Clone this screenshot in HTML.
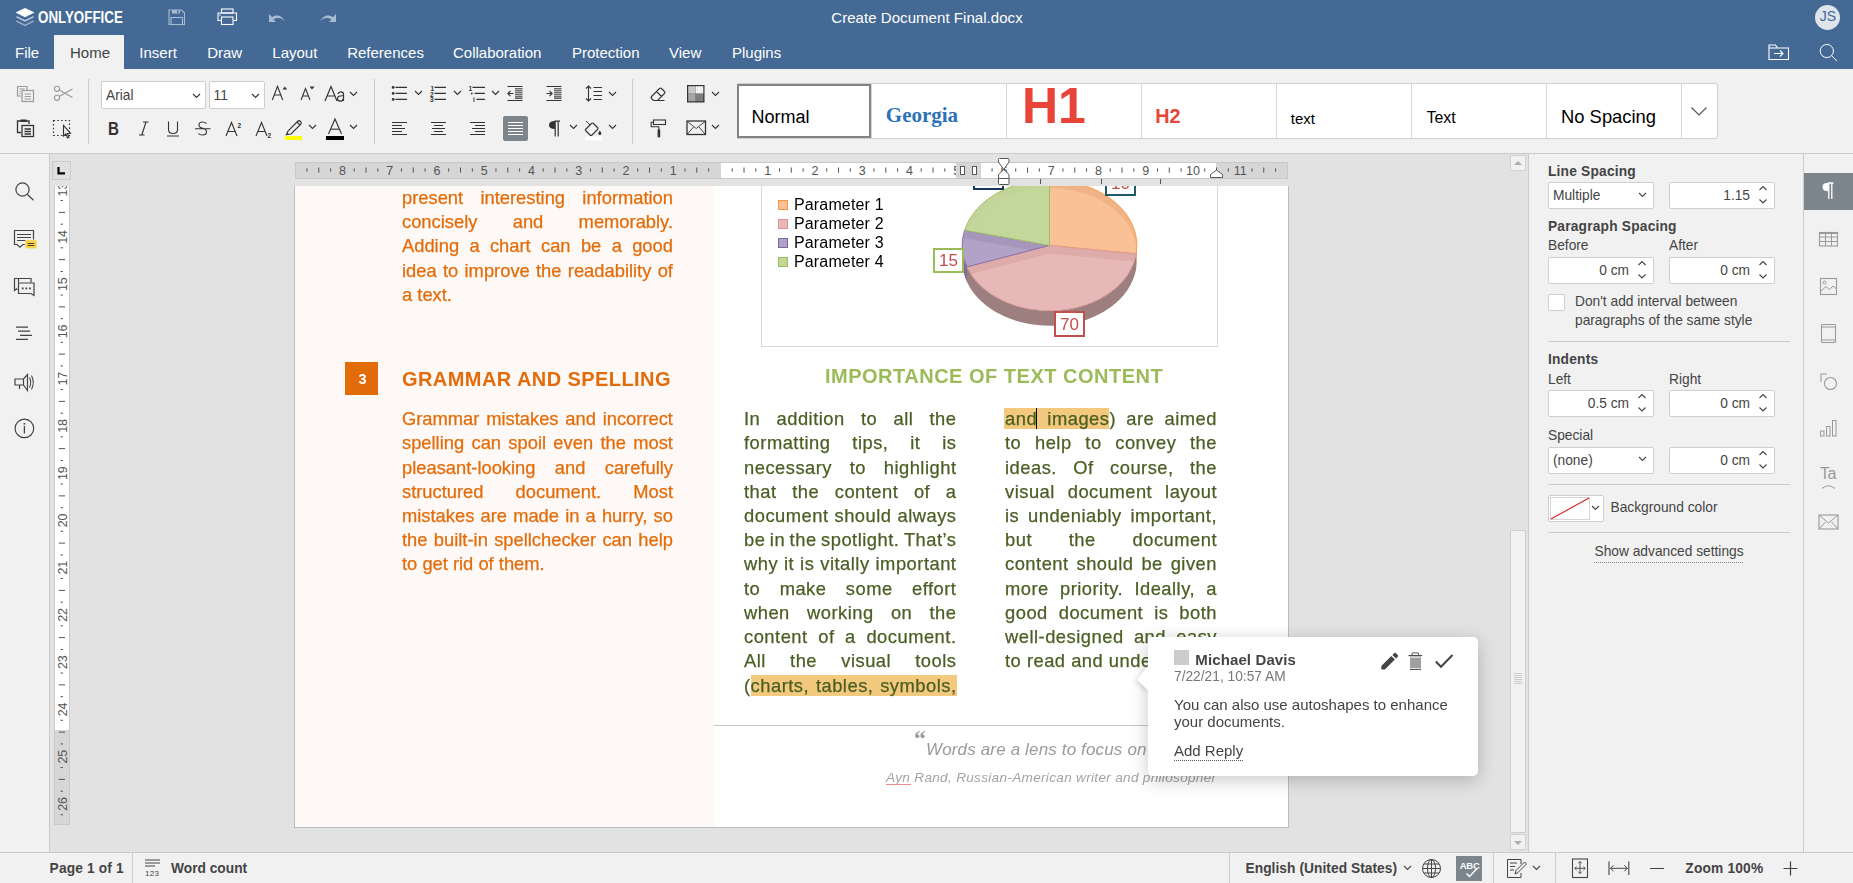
<!DOCTYPE html><html><head><meta charset="utf-8"><title>ONLYOFFICE</title><style>
html,body{margin:0;padding:0;width:1853px;height:883px;overflow:hidden;background:#f1f1f1;font-family:"Liberation Sans",sans-serif;}
.t{position:absolute;white-space:nowrap;}
.doc{will-change:transform;}
.j{-webkit-text-stroke:0.25px currentColor;}
.j{position:absolute;will-change:transform;display:flex;justify-content:space-between;white-space:nowrap;font-family:"Liberation Sans",sans-serif;}
.r{position:absolute;box-sizing:border-box;}
.s{position:absolute;overflow:visible;}
</style></head><body>

<div class="r" style="left:0px;top:0px;width:1853px;height:69px;background:#446995;"></div>
<svg class="s" style="left:14px;top:7px;" width="22" height="21" viewBox="0 0 22 21">
<path d="M11 1 L20.5 5.6 L11 10.2 L1.5 5.6 Z" fill="#fff"/>
<path d="M3.2 9.2 L11 13 L18.8 9.2 L20.5 10.1 L11 14.8 L1.5 10.1 Z" fill="#fff" opacity="0.65"/>
<path d="M3.2 13.6 L11 17.4 L18.8 13.6 L20.5 14.5 L11 19.2 L1.5 14.5 Z" fill="#fff" opacity="0.45"/>
</svg>
<div class="t " style="left:38.30px;top:9.63px;font-size:15.8px;line-height:15.8px;color:#fff;font-weight:bold;font-style:normal;font-family:'Liberation Sans', sans-serif;transform:scaleX(0.845);transform-origin:0 0;">ONLYOFFICE</div>
<svg class="s" style="left:168px;top:9px;" width="18" height="17" viewBox="0 0 18 17"><g fill="none" stroke="#a8bad0" stroke-width="1.1">
<path d="M1 1 H13.5 L16.5 4 V15.5 H1 Z"/><rect x="3" y="8.5" width="11.5" height="7"/></g>
<rect x="4" y="1" width="8" height="3.5" fill="#a8bad0"/><rect x="9" y="1.5" width="1.5" height="2.5" fill="#446995"/></svg>
<svg class="s" style="left:217px;top:8px;" width="21" height="18" viewBox="0 0 21 18"><g fill="none" stroke="#fff" stroke-width="1.1">
<rect x="4.5" y="1" width="11.5" height="4"/><path d="M4 12.5 H1 V5 H19.5 V12.5 H16.5"/><rect x="4.5" y="9" width="11.5" height="7.5"/></g>
<rect x="2.5" y="6.5" width="1.2" height="1.2" fill="#fff"/></svg>
<svg class="s" style="left:268px;top:13px;" width="19" height="10" viewBox="0 0 19 10"><path d="M1 1 V9 H8 L5.5 6.5 C9 4 13.5 4.5 17 8.5 C14 2 8 1 4 4 Z" fill="#a8bad0"/></svg>
<svg class="s" style="left:318px;top:13px;" width="19" height="10" viewBox="0 0 19 10"><path d="M18 1 V9 H11 L13.5 6.5 C10 4 5.5 4.5 2 8.5 C5 2 11 1 15 4 Z" fill="#a8bad0"/></svg>
<div class="t " style="left:831.30px;top:10.10px;font-size:15px;line-height:15px;color:#fff;font-weight:normal;font-style:normal;font-family:'Liberation Sans', sans-serif;letter-spacing:0.05px;">Create Document Final.docx</div>
<div class="r" style="left:1815px;top:5px;width:25px;height:25px;border-radius:50%;background:#dfe4ec;"></div>
<div class="t " style="left:1818.30px;top:9.35px;font-size:14px;line-height:14px;color:#446995;font-weight:normal;font-style:normal;font-family:'Liberation Sans', sans-serif;width:19px;text-align:center;">JS</div>
<div class="r" style="left:54px;top:35px;width:70px;height:34px;background:#f1f1f1;"></div>
<div class="t " style="left:15.00px;top:45.20px;font-size:15px;line-height:15px;color:#fff;font-weight:normal;font-style:normal;font-family:'Liberation Sans', sans-serif;">File</div>
<div class="t " style="left:70.00px;top:45.20px;font-size:15px;line-height:15px;color:#444;font-weight:normal;font-style:normal;font-family:'Liberation Sans', sans-serif;">Home</div>
<div class="t " style="left:139.30px;top:45.20px;font-size:15px;line-height:15px;color:#fff;font-weight:normal;font-style:normal;font-family:'Liberation Sans', sans-serif;">Insert</div>
<div class="t " style="left:207.20px;top:45.20px;font-size:15px;line-height:15px;color:#fff;font-weight:normal;font-style:normal;font-family:'Liberation Sans', sans-serif;">Draw</div>
<div class="t " style="left:272.30px;top:45.20px;font-size:15px;line-height:15px;color:#fff;font-weight:normal;font-style:normal;font-family:'Liberation Sans', sans-serif;">Layout</div>
<div class="t " style="left:347.20px;top:45.20px;font-size:15px;line-height:15px;color:#fff;font-weight:normal;font-style:normal;font-family:'Liberation Sans', sans-serif;">References</div>
<div class="t " style="left:453.00px;top:45.20px;font-size:15px;line-height:15px;color:#fff;font-weight:normal;font-style:normal;font-family:'Liberation Sans', sans-serif;">Collaboration</div>
<div class="t " style="left:572.00px;top:45.20px;font-size:15px;line-height:15px;color:#fff;font-weight:normal;font-style:normal;font-family:'Liberation Sans', sans-serif;">Protection</div>
<div class="t " style="left:669.00px;top:45.20px;font-size:15px;line-height:15px;color:#fff;font-weight:normal;font-style:normal;font-family:'Liberation Sans', sans-serif;">View</div>
<div class="t " style="left:732.00px;top:45.20px;font-size:15px;line-height:15px;color:#fff;font-weight:normal;font-style:normal;font-family:'Liberation Sans', sans-serif;">Plugins</div>
<svg class="s" style="left:1768px;top:44px;" width="22" height="17" viewBox="0 0 22 17"><g fill="none" stroke="#fff" stroke-width="1.1"><path d="M1 3.5 V15.5 H20.5 V4 H9.5 L7.5 1 H1 Z"/><path d="M1 4 H9"/><path d="M6 9.5 H15 M12 6.5 L15 9.5 L12 12.5"/></g></svg>
<svg class="s" style="left:1818px;top:43px;" width="21" height="19" viewBox="0 0 21 19"><g fill="none" stroke="#fff" stroke-width="1"><circle cx="8.8" cy="8" r="6.6"/><path d="M13.5 12.6 L19 18"/></g></svg>
<div class="r" style="left:0px;top:69px;width:1853px;height:84px;background:#f1f1f1;"></div>
<div class="r" style="left:0px;top:153px;width:1853px;height:1px;background:#cbcbcb;"></div>
<div class="r" style="left:88px;top:79px;width:1px;height:65px;background:#cbcbcb;"></div>
<div class="r" style="left:374px;top:79px;width:1px;height:65px;background:#cbcbcb;"></div>
<div class="r" style="left:632px;top:79px;width:1px;height:65px;background:#cbcbcb;"></div>
<svg class="s" style="left:16px;top:85px;" width="19" height="18" viewBox="0 0 19 18"><g fill="none" stroke="#9a9a9a" stroke-width="1.2"><path d="M5.5 11 H1.5 V1.5 H11 V5"/><rect x="6" y="5.5" width="11.5" height="11"/>
<path d="M8.5 9 H15 M8.5 11.5 H15 M8.5 14 H15 M3.5 4 H8.5 M3.5 6.5 H4.5 M3.5 8.5 H4.5"/></g></svg>
<svg class="s" style="left:53px;top:85px;" width="21" height="17" viewBox="0 0 21 17"><g fill="none" stroke="#9a9a9a" stroke-width="1.1"><circle cx="4" cy="3.8" r="2.6"/><circle cx="4" cy="12.8" r="2.6"/>
<path d="M6.2 5 L19.5 12.5 M6.2 11.6 L19.5 4"/></g></svg>
<svg class="s" style="left:16px;top:119px;" width="19" height="19" viewBox="0 0 19 19"><g fill="none" stroke="#333" stroke-width="1.3"><path d="M5 13.5 H1.5 V2 H13 V5"/><rect x="6" y="6.5" width="11.5" height="11"/>
<path d="M8.5 10 H15 M8.5 12.5 H15 M8.5 15 H15"/></g><rect x="4.5" y="0.5" width="6" height="2.5" fill="#333"/></svg>
<svg class="s" style="left:52px;top:119px;" width="21" height="21" viewBox="0 0 21 21"><rect x="1.5" y="1.5" width="16" height="15" fill="none" stroke="#333" stroke-width="1.2" stroke-dasharray="1.6 2.2"/>
<path d="M11.5 6.5 L11.5 17 L13.8 15 L15.5 19 L17 18.3 L15.3 14.5 L18.5 14.3 Z" fill="#f1f1f1" stroke="#333" stroke-width="1.1"/></svg>
<div class="r" style="left:101px;top:81px;width:105px;height:28px;background:#fff;border:1px solid #cfcfcf;border-radius:2px;"></div>
<div class="t " style="left:106.00px;top:88.96px;font-size:13.75px;line-height:13.75px;color:#444;font-weight:normal;font-style:normal;font-family:'Liberation Sans', sans-serif;">Arial</div>
<svg class="s" style="left:192px;top:92.5px;" width="9" height="6" viewBox="0 0 9 6"><path d="M1 1 L4.5 4.5 L8 1" fill="none" stroke="#333" stroke-width="1.1"/></svg>
<div class="r" style="left:209px;top:81px;width:56px;height:28px;background:#fff;border:1px solid #cfcfcf;border-radius:2px;"></div>
<div class="t " style="left:213.50px;top:88.96px;font-size:13.75px;line-height:13.75px;color:#444;font-weight:normal;font-style:normal;font-family:'Liberation Sans', sans-serif;">11</div>
<svg class="s" style="left:251.3px;top:92.5px;" width="9" height="6" viewBox="0 0 9 6"><path d="M1 1 L4.5 4.5 L8 1" fill="none" stroke="#333" stroke-width="1.1"/></svg>
<svg class="s" style="left:271px;top:85px;" width="18" height="16" viewBox="0 0 18 16"><path d="M1.3 15 L6.5 1.3 L11.7 15 M3.2 10 H9.8" fill="none" stroke="#333" stroke-width="1.1"/><path d="M11.5 4.5 L13.8 1.5 L16.2 4.5 Z" fill="#333"/></svg>
<svg class="s" style="left:300px;top:85px;" width="17" height="16" viewBox="0 0 17 16"><path d="M1 15 L5.5 3.5 L10 15 M2.6 11 H8.4" fill="none" stroke="#333" stroke-width="1.1"/><path d="M9.5 1.5 L14.5 1.5 L12 4.5 Z" fill="#333"/></svg>
<svg class="s" style="left:324px;top:85px;" width="22" height="17" viewBox="0 0 22 17"><path d="M1 16 L7 1.5 L13 16 M3.2 11 H10.8" fill="none" stroke="#333" stroke-width="1.2"/>
<path d="M13.8 9 Q14.5 6.8 16.8 6.8 Q19.5 6.8 19.5 9.5 V16 M19.5 10.8 Q13.5 10.5 13.5 13.5 Q13.5 16.2 16.2 16.2 Q18.8 16.2 19.5 13.5" fill="none" stroke="#333" stroke-width="1.2"/></svg>
<svg class="s" style="left:349px;top:91px;" width="9" height="6" viewBox="0 0 9 6"><path d="M1 1 L4.5 4.5 L8 1" fill="none" stroke="#333" stroke-width="1.1"/></svg>
<svg class="s" style="left:391px;top:85px;" width="18" height="17" viewBox="0 0 18 17"><g fill="#333"><circle cx="2.2" cy="2.4" r="1.4"/><circle cx="2.2" cy="8.4" r="1.4"/><circle cx="2.2" cy="14.4" r="1.4"/></g>
<path d="M4.5 2.4 H16 M4.5 8.4 H16 M4.5 14.4 H16" stroke="#333" stroke-width="1.1"/></svg>
<svg class="s" style="left:414px;top:90px;" width="9" height="6" viewBox="0 0 9 6"><path d="M1 1 L4.5 4.5 L8 1" fill="none" stroke="#333" stroke-width="1.1"/></svg>
<svg class="s" style="left:430px;top:85px;" width="18" height="18" viewBox="0 0 18 18"><text x="0.5" y="5.8" font-size="6.5" font-family="Liberation Sans" font-weight="bold" fill="#333">1</text>
<text x="0" y="11.6" font-size="6.5" font-family="Liberation Sans" font-weight="bold" fill="#333">2</text>
<text x="0" y="17.4" font-size="6.5" font-family="Liberation Sans" font-weight="bold" fill="#333">3</text>
<path d="M4.5 2.4 H16 M4.5 8.4 H16 M4.5 14.4 H16" stroke="#333" stroke-width="1.1"/></svg>
<svg class="s" style="left:453px;top:90px;" width="9" height="6" viewBox="0 0 9 6"><path d="M1 1 L4.5 4.5 L8 1" fill="none" stroke="#333" stroke-width="1.1"/></svg>
<svg class="s" style="left:468px;top:85px;" width="19" height="18" viewBox="0 0 19 18"><text x="0.5" y="6.2" font-size="6.5" font-family="Liberation Sans" font-weight="bold" fill="#333">1</text>
<circle cx="3.8" cy="8.5" r="0.9" fill="#333"/><text x="5" y="17.4" font-size="6.5" font-family="Liberation Sans" font-weight="bold" fill="#333">i</text>
<path d="M4.5 2.4 H17 M6.5 8.4 H17 M8.5 14.4 H17" stroke="#333" stroke-width="1.1"/></svg>
<svg class="s" style="left:491px;top:90px;" width="9" height="6" viewBox="0 0 9 6"><path d="M1 1 L4.5 4.5 L8 1" fill="none" stroke="#333" stroke-width="1.1"/></svg>
<svg class="s" style="left:507px;top:85px;" width="17" height="17" viewBox="0 0 17 17"><path d="M0.5 1.5 H15.5 M0.5 15.5 H15.5 M8 3.8 H15.5 M8 5.8 H15.5 M8 7.8 H15.5 M8 9.8 H15.5 M8 11.8 H15.5 M8 13.3 H15.5" stroke="#333" stroke-width="1"/>
<path d="M6.5 8.5 H0.8 M3.5 5.8 L0.8 8.5 L3.5 11.2" fill="none" stroke="#333" stroke-width="1.1"/></svg>
<svg class="s" style="left:546px;top:85px;" width="17" height="17" viewBox="0 0 17 17"><path d="M0.5 1.5 H15.5 M0.5 15.5 H15.5 M8 3.8 H15.5 M8 5.8 H15.5 M8 7.8 H15.5 M8 9.8 H15.5 M8 11.8 H15.5 M8 13.3 H15.5" stroke="#333" stroke-width="1"/>
<path d="M0.5 8.5 H6.2 M3.5 5.8 L6.2 8.5 L3.5 11.2" fill="none" stroke="#333" stroke-width="1.1"/></svg>
<svg class="s" style="left:585px;top:85px;" width="18" height="17" viewBox="0 0 18 17"><path d="M3.5 1 V16 M1 3.5 L3.5 1 L6 3.5 M1 13.5 L3.5 16 L6 13.5" fill="none" stroke="#333" stroke-width="1.1"/>
<path d="M8.5 2.5 H17 M8.5 6.5 H17 M8.5 10.5 H17 M8.5 14.5 H17" stroke="#333" stroke-width="1.1"/></svg>
<svg class="s" style="left:608px;top:91px;" width="9" height="6" viewBox="0 0 9 6"><path d="M1 1 L4.5 4.5 L8 1" fill="none" stroke="#333" stroke-width="1.1"/></svg>
<svg class="s" style="left:649px;top:85px;" width="18" height="17" viewBox="0 0 18 17"><path d="M3 11 L10.5 3.5 Q11.5 2.5 12.5 3.5 L15.5 6.5 Q16.5 7.5 15.5 8.5 L8.5 15.5 H4.5 L2.5 13.5 Q1.5 12.5 3 11 Z M7.5 6.5 L12.5 11.5 M8.5 15.5 H15.5" fill="none" stroke="#333" stroke-width="1.1"/></svg>
<svg class="s" style="left:686px;top:84px;" width="20" height="20" viewBox="0 0 20 20"><rect x="1" y="1" width="17.5" height="17.5" fill="#333"/><rect x="2.2" y="2.2" width="7.5" height="7.5" fill="#c8c8c8"/>
<rect x="9.7" y="2.2" width="7.6" height="7.5" fill="#f0f0f0"/><rect x="2.2" y="9.7" width="7.5" height="7.6" fill="#a6a6a6"/><rect x="9.7" y="9.7" width="7.6" height="7.6" fill="#7e7e7e"/></svg>
<svg class="s" style="left:711px;top:91px;" width="9" height="6" viewBox="0 0 9 6"><path d="M1 1 L4.5 4.5 L8 1" fill="none" stroke="#333" stroke-width="1.1"/></svg>
<div class="t " style="left:108.00px;top:120.06px;font-size:18px;line-height:18px;color:#333;font-weight:bold;font-style:normal;font-family:'Liberation Sans', sans-serif;transform:scaleX(0.84);transform-origin:0 0;">B</div>
<svg class="s" style="left:138px;top:121px;" width="12" height="15" viewBox="0 0 12 15"><path d="M5 1 H10.5 M1 14 H6.5 M8 1 L3.8 14" fill="none" stroke="#333" stroke-width="1.1"/></svg>
<svg class="s" style="left:166px;top:121px;" width="14" height="16" viewBox="0 0 14 16"><path d="M2.5 0.5 V8.5 Q2.5 12.5 7 12.5 Q11.5 12.5 11.5 8.5 V0.5 M1 15 H13" fill="none" stroke="#333" stroke-width="1.1"/></svg>
<svg class="s" style="left:194px;top:121px;" width="18" height="16" viewBox="0 0 18 16"><path d="M12.5 2.5 Q11 1 8.5 1 Q5 1 5 4 Q5 6.5 8.8 7.3 Q12.5 8.2 12.5 11 Q12.5 14 8.5 14 Q5.5 14 4.5 12.5 M1 7.8 H16.5" fill="none" stroke="#333" stroke-width="1.1"/></svg>
<svg class="s" style="left:225px;top:121px;" width="18" height="16" viewBox="0 0 18 16"><path d="M1 15 L6.5 1.5 L12 15 M3 10.5 H10" fill="none" stroke="#333" stroke-width="1.1"/><text x="12.5" y="6.5" font-size="6.5" font-family="Liberation Sans" font-weight="bold" fill="#333">2</text></svg>
<svg class="s" style="left:255px;top:121px;" width="19" height="17" viewBox="0 0 19 17"><path d="M1 15 L6.5 1.5 L12 15 M3 10.5 H10" fill="none" stroke="#333" stroke-width="1.1"/><text x="12.5" y="16.5" font-size="6.5" font-family="Liberation Sans" font-weight="bold" fill="#333">2</text></svg>
<svg class="s" style="left:284px;top:118px;" width="19" height="23" viewBox="0 0 19 23"><path d="M2.5 16.5 L4 13 L14 3 Q15 2 16.5 3.5 Q18 5 17 6 L7 16 Z M13 4 L16 7" fill="none" stroke="#333" stroke-width="1.1"/>
<path d="M1.5 17.5 L3.5 15 L5 16.5 Z" fill="#333"/><rect x="1" y="18" width="17" height="4" fill="#ffff00"/></svg>
<svg class="s" style="left:308px;top:124px;" width="9" height="6" viewBox="0 0 9 6"><path d="M1 1 L4.5 4.5 L8 1" fill="none" stroke="#333" stroke-width="1.1"/></svg>
<svg class="s" style="left:325px;top:118px;" width="21" height="23" viewBox="0 0 21 23"><path d="M3.5 16 L10 1 L16.5 16" fill="none" stroke="#333" stroke-width="1.1"/><path d="M5.6 11.2 H14.4" stroke="#333" stroke-width="1.1"/><rect x="1" y="18" width="18" height="4" fill="#000"/></svg>
<svg class="s" style="left:349px;top:124px;" width="9" height="6" viewBox="0 0 9 6"><path d="M1 1 L4.5 4.5 L8 1" fill="none" stroke="#333" stroke-width="1.1"/></svg>
<svg class="s" style="left:392px;top:121px;" width="16" height="15" viewBox="0 0 16 15"><path d="M0 1.5 H15 M0 4.5 H10 M0 7.5 H13 M0 10.5 H10 M0 13.5 H15 " stroke="#333" stroke-width="1.1"/></svg>
<svg class="s" style="left:431px;top:121px;" width="16" height="15" viewBox="0 0 16 15"><path d="M0 1.5 H15 M3 4.5 H12 M1 7.5 H14 M3 10.5 H12 M0 13.5 H15 " stroke="#333" stroke-width="1.1"/></svg>
<svg class="s" style="left:470px;top:121px;" width="16" height="15" viewBox="0 0 16 15"><path d="M0 1.5 H15 M5 4.5 H15 M2 7.5 H15 M5 10.5 H15 M0 13.5 H15 " stroke="#333" stroke-width="1.1"/></svg>
<div class="r" style="left:503px;top:116px;width:25px;height:25px;background:#7d858c;border-radius:2px;"></div>
<svg class="s" style="left:508px;top:121px;" width="16" height="15" viewBox="0 0 16 15"><path d="M0 1.5 H15 M0 4.5 H15 M0 7.5 H15 M0 10.5 H15 M0 13.5 H15 " stroke="#fff" stroke-width="1.1"/></svg>
<svg class="s" style="left:548px;top:120px;" width="13" height="17" viewBox="0 0 13 17"><path d="M6.5 1.2 H12 M7.2 1.2 V16.5 M10.2 1.2 V16.5" stroke="#333" stroke-width="1.2"/><path d="M7 1 Q1 1 1 5 Q1 9 7 9 Z" fill="#333"/></svg>
<svg class="s" style="left:569px;top:124px;" width="9" height="6" viewBox="0 0 9 6"><path d="M1 1 L4.5 4.5 L8 1" fill="none" stroke="#333" stroke-width="1.1"/></svg>
<svg class="s" style="left:583px;top:118px;" width="21" height="23" viewBox="0 0 21 23"><path d="M3 3 L7 7" stroke="#333" stroke-width="1"/><path d="M2.5 11.5 L8.5 5.5 Q9.5 4.5 10.5 5.5 L14.5 9.5 Q15.5 10.5 14.5 11.5 L9 17 Q8 18 7 17 L3 13 Q2 12 2.5 11.5 Z" fill="none" stroke="#333" stroke-width="1.1"/>
<path d="M16.8 12.5 Q15.3 14.5 15.3 15.5 Q15.3 17 16.8 17 Q18.3 17 18.3 15.5 Q18.3 14.5 16.8 12.5 Z" fill="#333"/><rect x="2" y="18.5" width="17" height="4" fill="#fff"/></svg>
<svg class="s" style="left:608px;top:124px;" width="9" height="6" viewBox="0 0 9 6"><path d="M1 1 L4.5 4.5 L8 1" fill="none" stroke="#333" stroke-width="1.1"/></svg>
<svg class="s" style="left:650px;top:119px;" width="17" height="19" viewBox="0 0 17 19"><rect x="3.5" y="1" width="12" height="4.5" fill="none" stroke="#333" stroke-width="1.1"/><path d="M3.5 3.2 H1.2 V7.8 H8.8 V10.5" fill="none" stroke="#333" stroke-width="1.1"/><rect x="7.6" y="10.3" width="2.6" height="8" fill="#333"/></svg>
<svg class="s" style="left:686px;top:120px;" width="21" height="16" viewBox="0 0 21 16"><rect x="1" y="1" width="18.5" height="13.5" fill="none" stroke="#333" stroke-width="1.3"/><path d="M1.5 1.5 L10.2 8.5 L19 1.5 M1.5 14 L7.5 7 M19 14 L13 7" fill="none" stroke="#333" stroke-width="0.9"/></svg>
<svg class="s" style="left:711px;top:124px;" width="9" height="6" viewBox="0 0 9 6"><path d="M1 1 L4.5 4.5 L8 1" fill="none" stroke="#333" stroke-width="1.1"/></svg>
<div class="r" style="left:737px;top:83px;width:981px;height:56px;background:#fff;border:1px solid #cfcfcf;border-radius:0 3px 3px 0;"></div>
<div class="r" style="left:871px;top:84px;width:1px;height:54px;background:#d8d8d8;"></div>
<div class="r" style="left:1006px;top:84px;width:1px;height:54px;background:#d8d8d8;"></div>
<div class="r" style="left:1141px;top:84px;width:1px;height:54px;background:#d8d8d8;"></div>
<div class="r" style="left:1276px;top:84px;width:1px;height:54px;background:#d8d8d8;"></div>
<div class="r" style="left:1411px;top:84px;width:1px;height:54px;background:#d8d8d8;"></div>
<div class="r" style="left:1546px;top:84px;width:1px;height:54px;background:#d8d8d8;"></div>
<div class="r" style="left:1681px;top:84px;width:1px;height:54px;background:#d8d8d8;"></div>
<div class="r" style="left:737px;top:84px;width:134px;height:54px;border:2px solid #848484;"></div>
<div class="t " style="left:751.50px;top:107.76px;font-size:18px;line-height:18px;color:#000;font-weight:normal;font-style:normal;font-family:'Liberation Sans', sans-serif;">Normal</div>
<div class="t " style="left:885.80px;top:105.41px;font-size:21px;line-height:21px;color:#2b72b8;font-weight:bold;font-style:normal;font-family:'Liberation Serif', serif;">Georgia</div>
<div class="t " style="left:1022.00px;top:81.08px;font-size:50px;line-height:50px;color:#e8443a;font-weight:bold;font-style:normal;font-family:'Liberation Sans', sans-serif;">H1</div>
<div class="t " style="left:1155.30px;top:106.54px;font-size:19.8px;line-height:19.8px;color:#e8443a;font-weight:bold;font-style:normal;font-family:'Liberation Sans', sans-serif;">H2</div>
<div class="t " style="left:1290.80px;top:110.60px;font-size:15px;line-height:15px;color:#000;font-weight:normal;font-style:normal;font-family:'Liberation Sans', sans-serif;">text</div>
<div class="t " style="left:1426.40px;top:109.76px;font-size:16px;line-height:16px;color:#000;font-weight:normal;font-style:normal;font-family:'Liberation Sans', sans-serif;">Text</div>
<div class="t " style="left:1561.00px;top:107.72px;font-size:18.4px;line-height:18.4px;color:#000;font-weight:normal;font-style:normal;font-family:'Liberation Sans', sans-serif;">No Spacing</div>
<svg class="s" style="left:1690px;top:106px;" width="18" height="11" viewBox="0 0 18 11"><path d="M1.5 1.5 L9 9 L16.5 1.5" fill="none" stroke="#555" stroke-width="1.2"/></svg>
<div class="r" style="left:0px;top:154px;width:49px;height:698px;background:#f1f1f1;"></div>
<div class="r" style="left:49px;top:154px;width:1px;height:698px;background:#cbcbcb;"></div>
<svg class="s" style="left:14px;top:181px;" width="21" height="21" viewBox="0 0 21 21"><g fill="none" stroke="#444" stroke-width="1.2"><circle cx="8.5" cy="8.5" r="6.6"/><path d="M13.2 13.2 L19.5 19.3"/></g></svg>
<svg class="s" style="left:13px;top:229px;" width="26" height="21" viewBox="0 0 26 21"><path d="M1.5 1.5 H20.5 V15.5 H10 L7 18.3 L4 15.5 H1.5 Z" fill="none" stroke="#444" stroke-width="1.2"/>
<path d="M4 5.5 H18 M4 8.5 H18 M4 11.5 H14" stroke="#444" stroke-width="1"/>
<rect x="12" y="10.8" width="12" height="9" rx="2.5" fill="#f7d046" stroke="#f1f1f1" stroke-width="0.6"/><path d="M14.8 14.5 H21.2 M14.8 16.5 H21.2" stroke="#444" stroke-width="1"/></svg>
<svg class="s" style="left:13px;top:277px;" width="23" height="20" viewBox="0 0 23 20"><path d="M5.5 5.5 V1.5 H18 V5.5 M4.5 12.5 H1.5 V1.5 H5.5" fill="none" stroke="#444" stroke-width="1.2"/><path d="M1.5 12.5 V13.5 L4 11.5" fill="none" stroke="#444" stroke-width="1.2"/>
<path d="M5.5 6 H21 V18.5 L18 16.5 H5.5 Z" fill="none" stroke="#444" stroke-width="1.2"/>
<g fill="#444"><rect x="8.8" y="10.5" width="1.8" height="1.8"/><rect x="12.4" y="10.5" width="1.8" height="1.8"/><rect x="16" y="10.5" width="1.8" height="1.8"/></g></svg>
<svg class="s" style="left:15px;top:325px;" width="19" height="16" viewBox="0 0 19 16"><path d="M1 2.2 H13 M3 6.2 H15 M5 10.3 H17 M1 14.3 H13" stroke="#444" stroke-width="1.2"/></svg>
<svg class="s" style="left:13px;top:373px;" width="23" height="19" viewBox="0 0 23 19"><path d="M2 6 H10.5 L14.5 1.5 V17.5 L10.5 12 H2 Z M10.5 6 V12 M6.5 12 V16" fill="none" stroke="#444" stroke-width="1.2"/>
<path d="M16.5 4.5 Q19 9.5 16.5 14.5 M18.5 2.5 Q22 9.5 18.5 16.5" fill="none" stroke="#444" stroke-width="1.1"/></svg>
<svg class="s" style="left:14px;top:418px;" width="22" height="22" viewBox="0 0 22 22"><circle cx="10.4" cy="10.4" r="9.3" fill="none" stroke="#444" stroke-width="1.2"/><path d="M10.4 8 V15.5" stroke="#444" stroke-width="1.3"/><rect x="9.6" y="5" width="1.6" height="1.6" fill="#444"/></svg>
<div class="r" style="left:50px;top:154px;width:1478px;height:698px;background:#e2e2e2;"></div>
<div class="r" style="left:52px;top:161px;width:19px;height:19px;background:#e0e0e0;border:1px solid #cacaca;"></div>
<svg class="s" style="left:57px;top:167px;" width="9" height="8" viewBox="0 0 9 8"><path d="M1.5 0 V6.3 H8" fill="none" stroke="#000" stroke-width="2.2"/></svg>
<div class="r" style="left:295px;top:162px;width:993px;height:17px;background:#d6d6d6;border:1px solid #c9c9c9;"></div>
<div class="r" style="left:721px;top:163px;width:495px;height:15px;background:#fff;"></div>
<svg class="s" style="left:0px;top:0px;pointer-events:none;" width="1853" height="200" viewBox="0 0 1853 200"><path d="M306.96 168.3 V171.6 M318.77 167.5 V172.7 M330.59 168.3 V171.6 M354.21 168.3 V171.6 M366.02 167.5 V172.7 M377.84 168.3 V171.6 M401.46 168.3 V171.6 M413.27 167.5 V172.7 M425.09 168.3 V171.6 M448.71 168.3 V171.6 M460.52 167.5 V172.7 M472.34 168.3 V171.6 M495.96 168.3 V171.6 M507.77 167.5 V172.7 M519.59 168.3 V171.6 M543.21 168.3 V171.6 M555.02 167.5 V172.7 M566.84 168.3 V171.6 M590.46 168.3 V171.6 M602.27 167.5 V172.7 M614.09 168.3 V171.6 M637.71 168.3 V171.6 M649.52 167.5 V172.7 M661.34 168.3 V171.6 M684.96 168.3 V171.6 M696.77 167.5 V172.7 M708.59 168.3 V171.6 M732.21 168.3 V171.6 M744.02 167.5 V172.7 M755.84 168.3 V171.6 M779.46 168.3 V171.6 M791.27 167.5 V172.7 M803.09 168.3 V171.6 M826.71 168.3 V171.6 M838.52 167.5 V172.7 M850.34 168.3 V171.6 M873.96 168.3 V171.6 M885.77 167.5 V172.7 M897.59 168.3 V171.6 M921.21 168.3 V171.6 M933.02 167.5 V172.7 M944.84 168.3 V171.6 M968.46 168.3 V171.6 M980.27 167.5 V172.7 M992.09 168.3 V171.6 M1015.71 168.3 V171.6 M1027.53 167.5 V172.7 M1039.34 168.3 V171.6 M1062.96 168.3 V171.6 M1074.78 167.5 V172.7 M1086.59 168.3 V171.6 M1110.21 168.3 V171.6 M1122.03 167.5 V172.7 M1133.84 168.3 V171.6 M1157.46 168.3 V171.6 M1169.28 167.5 V172.7 M1181.09 168.3 V171.6 M1204.71 168.3 V171.6 M1216.53 167.5 V172.7 M1228.34 168.3 V171.6 M1251.96 168.3 V171.6 M1263.78 167.5 V172.7 M1275.59 168.3 V171.6 " stroke="#555" stroke-width="1"/><text x="342.40" y="175" text-anchor="middle" font-size="12.5" font-family="Liberation Sans" fill="#555">8</text><text x="389.65" y="175" text-anchor="middle" font-size="12.5" font-family="Liberation Sans" fill="#555">7</text><text x="436.90" y="175" text-anchor="middle" font-size="12.5" font-family="Liberation Sans" fill="#555">6</text><text x="484.15" y="175" text-anchor="middle" font-size="12.5" font-family="Liberation Sans" fill="#555">5</text><text x="531.40" y="175" text-anchor="middle" font-size="12.5" font-family="Liberation Sans" fill="#555">4</text><text x="578.65" y="175" text-anchor="middle" font-size="12.5" font-family="Liberation Sans" fill="#555">3</text><text x="625.90" y="175" text-anchor="middle" font-size="12.5" font-family="Liberation Sans" fill="#555">2</text><text x="673.15" y="175" text-anchor="middle" font-size="12.5" font-family="Liberation Sans" fill="#555">1</text><text x="767.65" y="175" text-anchor="middle" font-size="12.5" font-family="Liberation Sans" fill="#555">1</text><text x="814.90" y="175" text-anchor="middle" font-size="12.5" font-family="Liberation Sans" fill="#555">2</text><text x="862.15" y="175" text-anchor="middle" font-size="12.5" font-family="Liberation Sans" fill="#555">3</text><text x="909.40" y="175" text-anchor="middle" font-size="12.5" font-family="Liberation Sans" fill="#555">4</text><text x="956.65" y="175" text-anchor="middle" font-size="12.5" font-family="Liberation Sans" fill="#555">5</text><text x="1003.90" y="175" text-anchor="middle" font-size="12.5" font-family="Liberation Sans" fill="#555">6</text><text x="1051.15" y="175" text-anchor="middle" font-size="12.5" font-family="Liberation Sans" fill="#555">7</text><text x="1098.40" y="175" text-anchor="middle" font-size="12.5" font-family="Liberation Sans" fill="#555">8</text><text x="1145.65" y="175" text-anchor="middle" font-size="12.5" font-family="Liberation Sans" fill="#555">9</text><text x="1192.90" y="175" text-anchor="middle" font-size="12.5" font-family="Liberation Sans" fill="#555">10</text><text x="1240.15" y="175" text-anchor="middle" font-size="12.5" font-family="Liberation Sans" fill="#555">11</text></svg>
<div class="r" style="left:956px;top:163px;width:25px;height:15px;background:#d6d6d6;"></div>
<div class="r" style="left:960px;top:166px;width:5px;height:9px;border:1px solid #555;background:#fff;"></div>
<div class="r" style="left:972px;top:166px;width:5px;height:9px;border:1px solid #555;background:#fff;"></div>
<svg class="s" style="left:997px;top:157px;" width="14" height="29" viewBox="0 0 14 29"><path d="M1.5 2.5 Q1.5 1.5 2.5 1.5 H11 Q12 1.5 12 2.5 V5 L6.75 12.5 L1.5 5 Z" fill="#fff" stroke="#555" stroke-width="1"/>
<path d="M6.75 12.5 L12 17.5 V26.5 Q12 27.5 11 27.5 H2.5 Q1.5 27.5 1.5 26.5 V17.5 Z" fill="#fff" stroke="#555" stroke-width="1"/><path d="M1.5 21.5 H12" stroke="#555" stroke-width="1"/></svg>
<svg class="s" style="left:1209px;top:169px;" width="15" height="10" viewBox="0 0 15 10"><path d="M1.5 8.5 V5.5 L7.5 1 L13.5 5.5 V8.5 Z" fill="#fff" stroke="#555" stroke-width="1"/></svg>
<div class="r" style="left:1040px;top:179px;width:1px;height:5px;background:#555;"></div>
<div class="r" style="left:1100.5px;top:179px;width:1px;height:5px;background:#555;"></div>
<div class="r" style="left:1160px;top:179px;width:1px;height:5px;background:#555;"></div>
<div class="r" style="left:54px;top:186px;width:16px;height:639px;background:#d6d6d6;border:1px solid #c9c9c9;border-top:none;"></div>
<div class="r" style="left:55px;top:186px;width:14px;height:544px;background:#fff;"></div>
<div style="position:absolute;left:0;top:0;width:1853px;height:883px;overflow:hidden;clip-path:inset(186px 0 0 0);"><svg style="position:absolute;left:0;top:0" width="200" height="883"><path d="M60.6 200.56 H63 M58.8 212.38 H65 M60.6 224.19 H63 M60.6 247.81 H63 M58.8 259.62 H65 M60.6 271.44 H63 M60.6 295.06 H63 M58.8 306.88 H65 M60.6 318.69 H63 M60.6 342.31 H63 M58.8 354.12 H65 M60.6 365.94 H63 M60.6 389.56 H63 M58.8 401.38 H65 M60.6 413.19 H63 M60.6 436.81 H63 M58.8 448.62 H65 M60.6 460.44 H63 M60.6 484.06 H63 M58.8 495.88 H65 M60.6 507.69 H63 M60.6 531.31 H63 M58.8 543.12 H65 M60.6 554.94 H63 M60.6 578.56 H63 M58.8 590.38 H65 M60.6 602.19 H63 M60.6 625.81 H63 M58.8 637.62 H65 M60.6 649.44 H63 M60.6 673.06 H63 M58.8 684.88 H65 M60.6 696.69 H63 M60.6 720.31 H63 M58.8 732.12 H65 M60.6 743.94 H63 M60.6 767.56 H63 M58.8 779.38 H65 M60.6 791.19 H63 M60.6 814.81 H63 " stroke="#555" stroke-width="1"/><text transform="translate(66.8 189.65) rotate(-90)" text-anchor="middle" font-size="12.5" font-family="Liberation Sans" fill="#555">13</text><text transform="translate(66.8 236.90) rotate(-90)" text-anchor="middle" font-size="12.5" font-family="Liberation Sans" fill="#555">14</text><text transform="translate(66.8 284.15) rotate(-90)" text-anchor="middle" font-size="12.5" font-family="Liberation Sans" fill="#555">15</text><text transform="translate(66.8 331.40) rotate(-90)" text-anchor="middle" font-size="12.5" font-family="Liberation Sans" fill="#555">16</text><text transform="translate(66.8 378.65) rotate(-90)" text-anchor="middle" font-size="12.5" font-family="Liberation Sans" fill="#555">17</text><text transform="translate(66.8 425.90) rotate(-90)" text-anchor="middle" font-size="12.5" font-family="Liberation Sans" fill="#555">18</text><text transform="translate(66.8 473.15) rotate(-90)" text-anchor="middle" font-size="12.5" font-family="Liberation Sans" fill="#555">19</text><text transform="translate(66.8 520.40) rotate(-90)" text-anchor="middle" font-size="12.5" font-family="Liberation Sans" fill="#555">20</text><text transform="translate(66.8 567.65) rotate(-90)" text-anchor="middle" font-size="12.5" font-family="Liberation Sans" fill="#555">21</text><text transform="translate(66.8 614.90) rotate(-90)" text-anchor="middle" font-size="12.5" font-family="Liberation Sans" fill="#555">22</text><text transform="translate(66.8 662.15) rotate(-90)" text-anchor="middle" font-size="12.5" font-family="Liberation Sans" fill="#555">23</text><text transform="translate(66.8 709.40) rotate(-90)" text-anchor="middle" font-size="12.5" font-family="Liberation Sans" fill="#555">24</text><text transform="translate(66.8 756.65) rotate(-90)" text-anchor="middle" font-size="12.5" font-family="Liberation Sans" fill="#555">25</text><text transform="translate(66.8 803.90) rotate(-90)" text-anchor="middle" font-size="12.5" font-family="Liberation Sans" fill="#555">26</text></svg></div>
<div class="r" style="left:294px;top:186px;width:995px;height:642px;background:#fff;border-left:1px solid #b9bdc4;border-right:1px solid #b9bdc4;border-bottom:1px solid #b9bdc4;"></div>
<div style="position:absolute;left:295px;top:186px;width:993px;height:641px;overflow:hidden;"><div style="position:absolute;left:-295px;top:-186px;width:1853px;height:883px;">
<div class="r" style="left:295px;top:186px;width:419px;height:641px;background:#fef9f6;"></div>
<div class="j" style="left:402.10px;top:188.88px;width:271px;font-size:18.33px;line-height:18.33px;color:#e36c0a;"><span>present</span><span>interesting</span><span>information</span></div>
<div class="j" style="left:402.10px;top:213.10px;width:271px;font-size:18.33px;line-height:18.33px;color:#e36c0a;"><span>concisely</span><span>and</span><span>memorably.</span></div>
<div class="j" style="left:402.10px;top:237.32px;width:271px;font-size:18.33px;line-height:18.33px;color:#e36c0a;"><span>Adding</span><span>a</span><span>chart</span><span>can</span><span>be</span><span>a</span><span>good</span></div>
<div class="j" style="left:402.10px;top:261.54px;width:271px;font-size:18.33px;line-height:18.33px;color:#e36c0a;"><span>idea</span><span>to</span><span>improve</span><span>the</span><span>readability</span><span>of</span></div>
<div class="t doc" style="left:402.10px;top:285.76px;font-size:18.33px;line-height:18.33px;color:#e36c0a;font-weight:normal;font-style:normal;font-family:'Liberation Sans', sans-serif;-webkit-text-stroke:0.25px currentColor;">a text.</div>
<div class="r" style="left:345px;top:362px;width:33px;height:33px;background:#e36c0a;"></div>
<div class="t doc" style="left:346.00px;top:372.13px;font-size:14.5px;line-height:14.5px;color:#fff;font-weight:bold;font-style:normal;font-family:'Liberation Sans', sans-serif;width:33px;text-align:center;">3</div>
<div class="t doc" style="left:402.30px;top:368.87px;font-size:20px;line-height:20px;color:#e36c0a;font-weight:bold;font-style:normal;font-family:'Liberation Sans', sans-serif;letter-spacing:0.43px;">GRAMMAR AND SPELLING</div>
<div class="j" style="left:402.10px;top:410.08px;width:271px;font-size:18.33px;line-height:18.33px;color:#e36c0a;"><span>Grammar</span><span>mistakes</span><span>and</span><span>incorrect</span></div>
<div class="j" style="left:402.10px;top:434.30px;width:271px;font-size:18.33px;line-height:18.33px;color:#e36c0a;"><span>spelling</span><span>can</span><span>spoil</span><span>even</span><span>the</span><span>most</span></div>
<div class="j" style="left:402.10px;top:458.52px;width:271px;font-size:18.33px;line-height:18.33px;color:#e36c0a;"><span>pleasant-looking</span><span>and</span><span>carefully</span></div>
<div class="j" style="left:402.10px;top:482.74px;width:271px;font-size:18.33px;line-height:18.33px;color:#e36c0a;"><span>structured</span><span>document.</span><span>Most</span></div>
<div class="j" style="left:402.10px;top:506.96px;width:271px;font-size:18.33px;line-height:18.33px;color:#e36c0a;"><span>mistakes</span><span>are</span><span>made</span><span>in</span><span>a</span><span>hurry,</span><span>so</span></div>
<div class="j" style="left:402.10px;top:531.18px;width:271px;font-size:18.33px;line-height:18.33px;color:#e36c0a;"><span>the</span><span>built-in</span><span>spellchecker</span><span>can</span><span>help</span></div>
<div class="t doc" style="left:402.10px;top:555.40px;font-size:18.33px;line-height:18.33px;color:#e36c0a;font-weight:normal;font-style:normal;font-family:'Liberation Sans', sans-serif;-webkit-text-stroke:0.25px currentColor;">to get rid of them.</div>
<div class="t doc" style="left:825.30px;top:366.27px;font-size:20px;line-height:20px;color:#9bbb59;font-weight:bold;font-style:normal;font-family:'Liberation Sans', sans-serif;letter-spacing:0.5px;">IMPORTANCE OF TEXT CONTENT</div>
<div class="r" style="left:751px;top:675px;width:206px;height:21px;background:#f2c97d;"></div>
<div class="r" style="left:1004px;top:408px;width:105px;height:21px;background:#f2c97d;"></div>
<div class="j" style="left:744.40px;top:410.08px;width:212.5px;font-size:18.33px;line-height:18.33px;color:#4b5e24;letter-spacing:0.5px;margin-right:-0.5px;"><span>In</span><span>addition</span><span>to</span><span>all</span><span>the</span></div>
<div class="j" style="left:744.40px;top:434.30px;width:212.5px;font-size:18.33px;line-height:18.33px;color:#4b5e24;letter-spacing:0.5px;margin-right:-0.5px;"><span>formatting</span><span>tips,</span><span>it</span><span>is</span></div>
<div class="j" style="left:744.40px;top:458.52px;width:212.5px;font-size:18.33px;line-height:18.33px;color:#4b5e24;letter-spacing:0.5px;margin-right:-0.5px;"><span>necessary</span><span>to</span><span>highlight</span></div>
<div class="j" style="left:744.40px;top:482.74px;width:212.5px;font-size:18.33px;line-height:18.33px;color:#4b5e24;letter-spacing:0.5px;margin-right:-0.5px;"><span>that</span><span>the</span><span>content</span><span>of</span><span>a</span></div>
<div class="j" style="left:744.40px;top:506.96px;width:212.5px;font-size:18.33px;line-height:18.33px;color:#4b5e24;letter-spacing:0.5px;margin-right:-0.5px;"><span>document</span><span>should</span><span>always</span></div>
<div class="j" style="left:744.40px;top:531.18px;width:212.5px;font-size:18.33px;line-height:18.33px;color:#4b5e24;letter-spacing:0.5px;margin-right:-0.5px;"><span>be</span><span>in</span><span>the</span><span>spotlight.</span><span>That’s</span></div>
<div class="j" style="left:744.40px;top:555.40px;width:212.5px;font-size:18.33px;line-height:18.33px;color:#4b5e24;letter-spacing:0.5px;margin-right:-0.5px;"><span>why</span><span>it</span><span>is</span><span>vitally</span><span>important</span></div>
<div class="j" style="left:744.40px;top:579.62px;width:212.5px;font-size:18.33px;line-height:18.33px;color:#4b5e24;letter-spacing:0.5px;margin-right:-0.5px;"><span>to</span><span>make</span><span>some</span><span>effort</span></div>
<div class="j" style="left:744.40px;top:603.84px;width:212.5px;font-size:18.33px;line-height:18.33px;color:#4b5e24;letter-spacing:0.5px;margin-right:-0.5px;"><span>when</span><span>working</span><span>on</span><span>the</span></div>
<div class="j" style="left:744.40px;top:628.06px;width:212.5px;font-size:18.33px;line-height:18.33px;color:#4b5e24;letter-spacing:0.5px;margin-right:-0.5px;"><span>content</span><span>of</span><span>a</span><span>document.</span></div>
<div class="j" style="left:744.40px;top:652.28px;width:212.5px;font-size:18.33px;line-height:18.33px;color:#4b5e24;letter-spacing:0.5px;margin-right:-0.5px;"><span>All</span><span>the</span><span>visual</span><span>tools</span></div>
<div class="j" style="left:744.40px;top:676.50px;width:212.5px;font-size:18.33px;line-height:18.33px;color:#4b5e24;letter-spacing:0.5px;margin-right:-0.5px;"><span>(charts,</span><span>tables,</span><span>symbols,</span></div>
<div class="j" style="left:1004.60px;top:410.08px;width:212px;font-size:18.33px;line-height:18.33px;color:#4b5e24;letter-spacing:0.5px;margin-right:-0.5px;"><span>and</span><span>images)</span><span>are</span><span>aimed</span></div>
<div class="j" style="left:1004.60px;top:434.30px;width:212px;font-size:18.33px;line-height:18.33px;color:#4b5e24;letter-spacing:0.5px;margin-right:-0.5px;"><span>to</span><span>help</span><span>to</span><span>convey</span><span>the</span></div>
<div class="j" style="left:1004.60px;top:458.52px;width:212px;font-size:18.33px;line-height:18.33px;color:#4b5e24;letter-spacing:0.5px;margin-right:-0.5px;"><span>ideas.</span><span>Of</span><span>course,</span><span>the</span></div>
<div class="j" style="left:1004.60px;top:482.74px;width:212px;font-size:18.33px;line-height:18.33px;color:#4b5e24;letter-spacing:0.5px;margin-right:-0.5px;"><span>visual</span><span>document</span><span>layout</span></div>
<div class="j" style="left:1004.60px;top:506.96px;width:212px;font-size:18.33px;line-height:18.33px;color:#4b5e24;letter-spacing:0.5px;margin-right:-0.5px;"><span>is</span><span>undeniably</span><span>important,</span></div>
<div class="j" style="left:1004.60px;top:531.18px;width:212px;font-size:18.33px;line-height:18.33px;color:#4b5e24;letter-spacing:0.5px;margin-right:-0.5px;"><span>but</span><span>the</span><span>document</span></div>
<div class="j" style="left:1004.60px;top:555.40px;width:212px;font-size:18.33px;line-height:18.33px;color:#4b5e24;letter-spacing:0.5px;margin-right:-0.5px;"><span>content</span><span>should</span><span>be</span><span>given</span></div>
<div class="j" style="left:1004.60px;top:579.62px;width:212px;font-size:18.33px;line-height:18.33px;color:#4b5e24;letter-spacing:0.5px;margin-right:-0.5px;"><span>more</span><span>priority.</span><span>Ideally,</span><span>a</span></div>
<div class="j" style="left:1004.60px;top:603.84px;width:212px;font-size:18.33px;line-height:18.33px;color:#4b5e24;letter-spacing:0.5px;margin-right:-0.5px;"><span>good</span><span>document</span><span>is</span><span>both</span></div>
<div class="j" style="left:1004.60px;top:628.06px;width:212px;font-size:18.33px;line-height:18.33px;color:#4b5e24;letter-spacing:0.5px;margin-right:-0.5px;"><span>well-designed</span><span>and</span><span>easy</span></div>
<div class="t doc" style="left:1004.60px;top:652.28px;font-size:18.33px;line-height:18.33px;color:#4b5e24;font-weight:normal;font-style:normal;font-family:'Liberation Sans', sans-serif;letter-spacing:0.5px;-webkit-text-stroke:0.25px currentColor;">to read and understand.</div>
<div class="r" style="left:1036px;top:408px;width:1px;height:21px;background:#000;"></div>
<div class="r" style="left:714px;top:725px;width:574px;height:1px;background:#c4c4c4;"></div>
<div class="t doc" style="left:914.00px;top:725.90px;font-size:24px;line-height:24px;color:#999;font-weight:bold;font-style:normal;font-family:'Liberation Serif', serif;">“</div>
<div class="t doc" style="left:925.50px;top:740.61px;font-size:17px;line-height:17px;color:#9a9a9a;font-weight:normal;font-style:italic;font-family:'Liberation Sans', sans-serif;letter-spacing:0.15px;">Words are a lens to focus on one’s mind.</div>
<div class="t doc" style="left:886.00px;top:771.09px;font-size:13.6px;line-height:13.6px;color:#a3a3a3;font-weight:normal;font-style:italic;font-family:'Liberation Sans', sans-serif;letter-spacing:0.3px;">Ayn Rand, Russian-American writer and philosopher</div>
<div class="r" style="left:886px;top:784px;width:25px;height:1px;background:#f08a8a;"></div>
<div class="r" style="left:761px;top:150px;width:457px;height:197px;background:#fff;border:1px solid #d9d9d9;"></div>
<div class="r" style="left:778px;top:200px;width:10px;height:10px;background:#f9c195;border:1px solid #f79646;"></div>
<div class="t doc" style="left:794.30px;top:197.06px;font-size:16px;line-height:16px;color:#000;font-weight:normal;font-style:normal;font-family:'Liberation Sans', sans-serif;letter-spacing:0.15px;">Parameter 1</div>
<div class="r" style="left:778px;top:219px;width:10px;height:10px;background:#e6b9b8;border:1px solid #d99694;"></div>
<div class="t doc" style="left:794.30px;top:216.16px;font-size:16px;line-height:16px;color:#000;font-weight:normal;font-style:normal;font-family:'Liberation Sans', sans-serif;letter-spacing:0.15px;">Parameter 2</div>
<div class="r" style="left:778px;top:238px;width:10px;height:10px;background:#b3a2c7;border:1px solid #8064a2;"></div>
<div class="t doc" style="left:794.30px;top:235.26px;font-size:16px;line-height:16px;color:#000;font-weight:normal;font-style:normal;font-family:'Liberation Sans', sans-serif;letter-spacing:0.15px;">Parameter 3</div>
<div class="r" style="left:778px;top:257px;width:10px;height:10px;background:#c4d79b;border:1px solid #9bbb59;"></div>
<div class="t doc" style="left:794.30px;top:254.36px;font-size:16px;line-height:16px;color:#000;font-weight:normal;font-style:normal;font-family:'Liberation Sans', sans-serif;letter-spacing:0.15px;">Parameter 4</div>
<svg class="s" style="left:0px;top:0px;" width="1853" height="883" viewBox="0 0 1853 883"><defs><clipPath id="pc0"><path d="M1049.5 245.4 L1049.50 180.00 A87.4 65.4 0 0 1 1136.17 253.82 Z"/></clipPath><clipPath id="pc1"><path d="M1049.5 245.4 L1136.17 253.82 A87.4 65.4 0 0 1 966.96 266.91 Z"/></clipPath><clipPath id="pc2"><path d="M1049.5 245.4 L966.96 266.91 A87.4 65.4 0 0 1 964.51 230.13 Z"/></clipPath><clipPath id="pc3"><path d="M1049.5 245.4 L964.51 230.13 A87.4 65.4 0 0 1 1049.50 180.00 Z"/></clipPath></defs><path d="M1136.90 245.40 A87.4 65.4 0 0 1 1136.17 253.82 L1136.17 268.82 A87.4 65.4 0 0 0 1136.90 260.40 Z" fill="#d99a68"/><path d="M1136.17 253.82 A87.4 65.4 0 0 1 966.96 266.91 L966.96 281.91 A87.4 65.4 0 0 0 1136.17 268.82 Z" fill="#9e7f80"/><path d="M966.96 266.91 A87.4 65.4 0 0 1 962.10 245.40 L962.10 260.40 A87.4 65.4 0 0 0 966.96 281.91 Z" fill="#7d6d95"/><path d="M1136.90 245.40 A87.4 65.4 0 0 1 1136.17 253.82 L1136.17 268.82 A87.4 65.4 0 0 0 1136.90 260.40 Z" fill="rgba(0,0,0,0)"/><path d="M1049.5 245.4 L1049.50 180.00 A87.4 65.4 0 0 1 1136.17 253.82 Z" fill="#efb385"/><g clip-path="url(#pc0)"><path d="M1049.5 245.4 L1049.50 180.00 A87.4 65.4 0 0 1 1136.17 253.82 Z" fill="#f9c195" transform="translate(0 8) scale(1 1)"/></g><path d="M1049.5 245.4 L1049.50 180.00 A87.4 65.4 0 0 1 1136.17 253.82 Z" fill="none" stroke="#f79646" stroke-width="1" opacity="0.8"/><path d="M1049.5 245.4 L1136.17 253.82 A87.4 65.4 0 0 1 966.96 266.91 Z" fill="#dcabaa"/><g clip-path="url(#pc1)"><path d="M1049.5 245.4 L1136.17 253.82 A87.4 65.4 0 0 1 966.96 266.91 Z" fill="#e6b9b8" transform="translate(0 8) scale(1 1)"/></g><path d="M1049.5 245.4 L1136.17 253.82 A87.4 65.4 0 0 1 966.96 266.91 Z" fill="none" stroke="#d99694" stroke-width="1" opacity="0.8"/><path d="M1049.5 245.4 L966.96 266.91 A87.4 65.4 0 0 1 964.51 230.13 Z" fill="#a696bb"/><g clip-path="url(#pc2)"><path d="M1049.5 245.4 L966.96 266.91 A87.4 65.4 0 0 1 964.51 230.13 Z" fill="#b3a2c7" transform="translate(0 8) scale(1 1)"/></g><path d="M1049.5 245.4 L966.96 266.91 A87.4 65.4 0 0 1 964.51 230.13 Z" fill="none" stroke="#8064a2" stroke-width="1" opacity="0.8"/><path d="M1049.5 245.4 L964.51 230.13 A87.4 65.4 0 0 1 1049.50 180.00 Z" fill="#c2d498"/><g clip-path="url(#pc3)"><path d="M1049.5 245.4 L964.51 230.13 A87.4 65.4 0 0 1 1049.50 180.00 Z" fill="#c4d79b" transform="translate(0 8) scale(1 1)"/></g><path d="M1049.5 245.4 L964.51 230.13 A87.4 65.4 0 0 1 1049.50 180.00 Z" fill="none" stroke="#9bbb59" stroke-width="1" opacity="0.8"/></svg>
<div class="r" style="left:933px;top:248px;width:31px;height:25px;background:#fff;border:2px solid #9bbb59;"></div>
<div class="t doc" style="left:933.00px;top:252.11px;font-size:17px;line-height:17px;color:#c0504d;font-weight:normal;font-style:normal;font-family:'Liberation Sans', sans-serif;width:31px;text-align:center;">15</div>
<div class="r" style="left:1054px;top:311px;width:31px;height:26px;background:#fff;border:2px solid #c0504d;"></div>
<div class="t doc" style="left:1054.00px;top:316.11px;font-size:17px;line-height:17px;color:#c0504d;font-weight:normal;font-style:normal;font-family:'Liberation Sans', sans-serif;width:31px;text-align:center;">70</div>
<div class="r" style="left:973px;top:165px;width:31px;height:25px;background:#fff;border:2px solid #17375e;"></div>
<div class="r" style="left:1105px;top:170px;width:31px;height:26px;background:#fff;border:2px solid #215968;"></div>
<div class="t doc" style="left:1105.00px;top:175.11px;font-size:17px;line-height:17px;color:#c0504d;font-weight:normal;font-style:normal;font-family:'Liberation Sans', sans-serif;width:31px;text-align:center;">10</div>
</div></div>
<div style="position:absolute;left:1148px;top:637px;width:330px;height:139px;background:#fff;border-radius:5px;box-shadow:0 4px 18px rgba(0,0,0,0.22);"></div>
<svg class="s" style="left:1130px;top:660px;" width="22" height="40" viewBox="0 0 22 40"><path d="M19 5 L6.8 19.8 L19 31 Z" fill="#fff" style="filter:drop-shadow(-2px 2px 2px rgba(0,0,0,0.12))"/></svg>
<div class="r" style="left:1148px;top:664px;width:4px;height:30px;background:#fff;"></div>
<div class="r" style="left:1174px;top:650px;width:15px;height:15px;background:#cccccc;"></div>
<div class="t " style="left:1195.30px;top:651.50px;font-size:15px;line-height:15px;color:#444;font-weight:bold;font-style:normal;font-family:'Liberation Sans', sans-serif;letter-spacing:0.12px;">Michael Davis</div>
<div class="t " style="left:1174.00px;top:670.06px;font-size:13.75px;line-height:13.75px;color:#777;font-weight:normal;font-style:normal;font-family:'Liberation Sans', sans-serif;">7/22/21, 10:57 AM</div>
<div class="t " style="left:1174.00px;top:697.00px;font-size:15px;line-height:15px;color:#444;font-weight:normal;font-style:normal;font-family:'Liberation Sans', sans-serif;">You can also use autoshapes to enhance</div>
<div class="t " style="left:1174.00px;top:713.90px;font-size:15px;line-height:15px;color:#444;font-weight:normal;font-style:normal;font-family:'Liberation Sans', sans-serif;">your documents.</div>
<div class="t " style="left:1174.00px;top:743.30px;font-size:15px;line-height:15px;color:#444;font-weight:normal;font-style:normal;font-family:'Liberation Sans', sans-serif;">Add Reply</div>
<div class="r" style="left:1174px;top:760px;width:69px;height:1px;border-top:1px dotted #555;"></div>
<svg class="s" style="left:1379px;top:651px;" width="22" height="21" viewBox="0 0 22 21"><path d="M2.3 18.6 V15 L12.3 5 L15.9 8.6 L5.9 18.6 Z" fill="#444"/><path d="M13.4 3.9 L15.3 2 Q16 1.3 16.7 2 L18.9 4.2 Q19.6 4.9 18.9 5.6 L17 7.5 Z" fill="#444"/></svg>
<svg class="s" style="left:1407px;top:651px;" width="17" height="21" viewBox="0 0 17 21"><path d="M1.5 4.6 H15.2" stroke="#444" stroke-width="1.1"/><path d="M5.2 4 V2.2 Q5.2 1.9 5.5 1.9 H11.3 Q11.6 1.9 11.6 2.2 V4" fill="none" stroke="#444" stroke-width="0.9"/><rect x="3" y="5.3" width="11" height="13" fill="#a0a0a0"/><path d="M3.5 6.3 H13.5 M3.5 17.6 H13.5" stroke="#fff" stroke-width="0.8"/><path d="M3 18.5 H14" stroke="#444" stroke-width="0.9"/></svg>
<svg class="s" style="left:1434px;top:653px;" width="21" height="17" viewBox="0 0 21 17"><path d="M1.8 8.5 L7 13.8 L18.5 2" fill="none" stroke="#444" stroke-width="2"/></svg>
<div class="r" style="left:1510px;top:155px;width:16px;height:16px;background:#f1f1f1;border:1px solid #d2d2d2;"></div>
<svg class="s" style="left:1513px;top:160px;" width="10" height="6" viewBox="0 0 10 6"><path d="M1 5 L5 1 L9 5 Z" fill="#adadad"/></svg>
<div class="r" style="left:1510px;top:530px;width:16px;height:303px;background:#f1f1f1;border:1px solid #cfcfcf;border-radius:1px;"></div>
<svg class="s" style="left:1514px;top:672px" width="8" height="14"><path d="M0 1.5H8M0 3.5H8M0 5.5H8M0 7.5H8M0 9.5H8M0 11.5H8" stroke="#cdcdcd" stroke-width="1"/></svg>
<div class="r" style="left:1510px;top:834px;width:16px;height:16px;background:#f1f1f1;border:1px solid #d2d2d2;"></div>
<svg class="s" style="left:1513px;top:840px;" width="10" height="6" viewBox="0 0 10 6"><path d="M1 1 L5 5 L9 1 Z" fill="#adadad"/></svg>
<div class="r" style="left:1528px;top:154px;width:1px;height:698px;background:#cbcbcb;"></div>
<div class="r" style="left:1529px;top:154px;width:274px;height:698px;background:#f1f1f1;"></div>
<div class="r" style="left:1803px;top:154px;width:1px;height:698px;background:#cbcbcb;"></div>
<div class="r" style="left:1804px;top:154px;width:49px;height:698px;background:#f1f1f1;"></div>
<div class="t " style="left:1548.00px;top:165.26px;font-size:13.75px;line-height:13.75px;color:#444;font-weight:bold;font-style:normal;font-family:'Liberation Sans', sans-serif;letter-spacing:0.2px;">Line Spacing</div>
<div class="r" style="left:1548px;top:182px;width:106px;height:27px;background:#fff;border:1px solid #cfcfcf;border-radius:2px;"></div>
<div class="t " style="left:1553.00px;top:188.86px;font-size:13.75px;line-height:13.75px;color:#444;font-weight:normal;font-style:normal;font-family:'Liberation Sans', sans-serif;">Multiple</div>
<svg class="s" style="left:1638px;top:192px;" width="9" height="6" viewBox="0 0 9 6"><path d="M1 1 L4.5 4.5 L8 1" fill="none" stroke="#444" stroke-width="1.1"/></svg>
<div class="r" style="left:1669px;top:182px;width:106px;height:27px;background:#fff;border:1px solid #cfcfcf;border-radius:2px;"></div>
<div class="t " style="left:1669.00px;top:188.86px;font-size:13.75px;line-height:13.75px;color:#444;font-weight:normal;font-style:normal;font-family:'Liberation Sans', sans-serif;width:81px;text-align:right;">1.15</div>
<svg class="s" style="left:1758px;top:185px;" width="10" height="20" viewBox="0 0 10 20"><path d="M1.5 5 L5 1.5 L8.5 5 M1.5 14.5 L5 18 L8.5 14.5" fill="none" stroke="#444" stroke-width="1.1"/></svg>
<div class="t " style="left:1548.00px;top:220.46px;font-size:13.75px;line-height:13.75px;color:#444;font-weight:bold;font-style:normal;font-family:'Liberation Sans', sans-serif;letter-spacing:0.2px;">Paragraph Spacing</div>
<div class="t " style="left:1548.00px;top:239.36px;font-size:13.75px;line-height:13.75px;color:#444;font-weight:normal;font-style:normal;font-family:'Liberation Sans', sans-serif;">Before</div>
<div class="t " style="left:1669.00px;top:239.36px;font-size:13.75px;line-height:13.75px;color:#444;font-weight:normal;font-style:normal;font-family:'Liberation Sans', sans-serif;">After</div>
<div class="r" style="left:1548px;top:257px;width:106px;height:27px;background:#fff;border:1px solid #cfcfcf;border-radius:2px;"></div>
<div class="t " style="left:1548.00px;top:263.86px;font-size:13.75px;line-height:13.75px;color:#444;font-weight:normal;font-style:normal;font-family:'Liberation Sans', sans-serif;width:81px;text-align:right;">0 cm</div>
<svg class="s" style="left:1637px;top:260px;" width="10" height="20" viewBox="0 0 10 20"><path d="M1.5 5 L5 1.5 L8.5 5 M1.5 14.5 L5 18 L8.5 14.5" fill="none" stroke="#444" stroke-width="1.1"/></svg>
<div class="r" style="left:1669px;top:257px;width:106px;height:27px;background:#fff;border:1px solid #cfcfcf;border-radius:2px;"></div>
<div class="t " style="left:1669.00px;top:263.86px;font-size:13.75px;line-height:13.75px;color:#444;font-weight:normal;font-style:normal;font-family:'Liberation Sans', sans-serif;width:81px;text-align:right;">0 cm</div>
<svg class="s" style="left:1758px;top:260px;" width="10" height="20" viewBox="0 0 10 20"><path d="M1.5 5 L5 1.5 L8.5 5 M1.5 14.5 L5 18 L8.5 14.5" fill="none" stroke="#444" stroke-width="1.1"/></svg>
<div class="r" style="left:1548px;top:294px;width:17px;height:17px;background:#fff;border:1px solid #cfcfcf;border-radius:2px;"></div>
<div class="t " style="left:1575.00px;top:295.46px;font-size:13.75px;line-height:13.75px;color:#444;font-weight:normal;font-style:normal;font-family:'Liberation Sans', sans-serif;">Don't add interval between</div>
<div class="t " style="left:1575.00px;top:313.86px;font-size:13.75px;line-height:13.75px;color:#444;font-weight:normal;font-style:normal;font-family:'Liberation Sans', sans-serif;">paragraphs of the same style</div>
<div class="r" style="left:1548px;top:341px;width:242px;height:1px;background:#cbcbcb;"></div>
<div class="t " style="left:1548.00px;top:353.46px;font-size:13.75px;line-height:13.75px;color:#444;font-weight:bold;font-style:normal;font-family:'Liberation Sans', sans-serif;letter-spacing:0.2px;">Indents</div>
<div class="t " style="left:1548.00px;top:372.76px;font-size:13.75px;line-height:13.75px;color:#444;font-weight:normal;font-style:normal;font-family:'Liberation Sans', sans-serif;">Left</div>
<div class="t " style="left:1669.00px;top:372.76px;font-size:13.75px;line-height:13.75px;color:#444;font-weight:normal;font-style:normal;font-family:'Liberation Sans', sans-serif;">Right</div>
<div class="r" style="left:1548px;top:390px;width:106px;height:27px;background:#fff;border:1px solid #cfcfcf;border-radius:2px;"></div>
<div class="t " style="left:1548.00px;top:397.16px;font-size:13.75px;line-height:13.75px;color:#444;font-weight:normal;font-style:normal;font-family:'Liberation Sans', sans-serif;width:81px;text-align:right;">0.5 cm</div>
<svg class="s" style="left:1637px;top:393px;" width="10" height="20" viewBox="0 0 10 20"><path d="M1.5 5 L5 1.5 L8.5 5 M1.5 14.5 L5 18 L8.5 14.5" fill="none" stroke="#444" stroke-width="1.1"/></svg>
<div class="r" style="left:1669px;top:390px;width:106px;height:27px;background:#fff;border:1px solid #cfcfcf;border-radius:2px;"></div>
<div class="t " style="left:1669.00px;top:397.16px;font-size:13.75px;line-height:13.75px;color:#444;font-weight:normal;font-style:normal;font-family:'Liberation Sans', sans-serif;width:81px;text-align:right;">0 cm</div>
<svg class="s" style="left:1758px;top:393px;" width="10" height="20" viewBox="0 0 10 20"><path d="M1.5 5 L5 1.5 L8.5 5 M1.5 14.5 L5 18 L8.5 14.5" fill="none" stroke="#444" stroke-width="1.1"/></svg>
<div class="t " style="left:1548.00px;top:428.76px;font-size:13.75px;line-height:13.75px;color:#444;font-weight:normal;font-style:normal;font-family:'Liberation Sans', sans-serif;">Special</div>
<div class="r" style="left:1548px;top:447px;width:106px;height:27px;background:#fff;border:1px solid #cfcfcf;border-radius:2px;"></div>
<div class="t " style="left:1553.00px;top:453.66px;font-size:13.75px;line-height:13.75px;color:#444;font-weight:normal;font-style:normal;font-family:'Liberation Sans', sans-serif;">(none)</div>
<svg class="s" style="left:1638px;top:456px;" width="9" height="6" viewBox="0 0 9 6"><path d="M1 1 L4.5 4.5 L8 1" fill="none" stroke="#444" stroke-width="1.1"/></svg>
<div class="r" style="left:1669px;top:447px;width:106px;height:27px;background:#fff;border:1px solid #cfcfcf;border-radius:2px;"></div>
<div class="t " style="left:1669.00px;top:453.66px;font-size:13.75px;line-height:13.75px;color:#444;font-weight:normal;font-style:normal;font-family:'Liberation Sans', sans-serif;width:81px;text-align:right;">0 cm</div>
<svg class="s" style="left:1758px;top:450px;" width="10" height="20" viewBox="0 0 10 20"><path d="M1.5 5 L5 1.5 L8.5 5 M1.5 14.5 L5 18 L8.5 14.5" fill="none" stroke="#444" stroke-width="1.1"/></svg>
<div class="r" style="left:1548px;top:484px;width:242px;height:1px;background:#cbcbcb;"></div>
<div class="r" style="left:1548px;top:495px;width:56px;height:27px;background:#fff;border:1px solid #cfcfcf;border-radius:2px;"></div>
<div class="r" style="left:1550px;top:497px;width:40px;height:23px;background:#fff;border:1px solid #d5d5d5;"></div>
<svg class="s" style="left:1550px;top:497px;" width="40" height="23" viewBox="0 0 40 23"><path d="M1 22 L39 1" stroke="#e02020" stroke-width="1.1"/></svg>
<svg class="s" style="left:1591px;top:505px;" width="9" height="6" viewBox="0 0 9 6"><path d="M1 1 L4.5 4.5 L8 1" fill="none" stroke="#444" stroke-width="1.1"/></svg>
<div class="t " style="left:1610.50px;top:500.66px;font-size:13.75px;line-height:13.75px;color:#444;font-weight:normal;font-style:normal;font-family:'Liberation Sans', sans-serif;">Background color</div>
<div class="r" style="left:1548px;top:532px;width:242px;height:1px;background:#cbcbcb;"></div>
<div class="t " style="left:1594.50px;top:544.66px;font-size:13.75px;line-height:13.75px;color:#444;font-weight:normal;font-style:normal;font-family:'Liberation Sans', sans-serif;">Show advanced settings</div>
<div class="r" style="left:1594px;top:562px;width:149px;height:1px;border-top:1px dotted #888;"></div>
<div class="r" style="left:1804px;top:173px;width:49px;height:37px;background:#7d858c;"></div>
<svg class="s" style="left:1821px;top:181px;" width="14" height="20" viewBox="0 0 14 20"><path d="M7 2 H12.5 M7.8 2 V18 M10.8 2 V18" stroke="#fff" stroke-width="1.3"/><path d="M7.5 1.8 Q1.5 1.8 1.5 6 Q1.5 10.2 7.5 10.2 Z" fill="#fff"/></svg>
<svg class="s" style="left:1818px;top:231px;" width="21" height="17" viewBox="0 0 21 17"><rect x="1.5" y="1.5" width="18" height="13.5" fill="none" stroke="#9a9a9a" stroke-width="1.1"/><path d="M1.5 2 H19.5" stroke="#9a9a9a" stroke-width="2"/><path d="M1.5 6 H19.5 M1.5 10.5 H19.5 M7.5 2 V15 M13.5 2 V15" stroke="#9a9a9a" stroke-width="1"/></svg>
<svg class="s" style="left:1819px;top:277px;" width="19" height="19" viewBox="0 0 19 19"><rect x="1.5" y="1.5" width="16" height="16" fill="none" stroke="#9a9a9a" stroke-width="1.1"/><circle cx="5.5" cy="5.5" r="1.5" fill="none" stroke="#9a9a9a" stroke-width="1"/><path d="M1.5 14.5 L7 9.5 L10.5 12.5 L14 9 L17.5 12" fill="none" stroke="#9a9a9a" stroke-width="1"/></svg>
<svg class="s" style="left:1820px;top:323px;" width="17" height="21" viewBox="0 0 17 21"><rect x="1.5" y="1.5" width="14" height="18" rx="1" fill="none" stroke="#9a9a9a" stroke-width="1.1"/><path d="M1.5 4 H15.5 M1.5 17 H15.5" stroke="#9a9a9a" stroke-width="1"/></svg>
<svg class="s" style="left:1819px;top:372px;" width="19" height="19" viewBox="0 0 19 19"><path d="M8 2 H2 V10" fill="none" stroke="#9a9a9a" stroke-width="1.1"/><circle cx="11.5" cy="11.5" r="6" fill="none" stroke="#9a9a9a" stroke-width="1.1"/></svg>
<svg class="s" style="left:1819px;top:419px;" width="19" height="19" viewBox="0 0 19 19"><rect x="1.5" y="12" width="3.5" height="5" fill="none" stroke="#9a9a9a" stroke-width="1"/><rect x="7.5" y="7.5" width="3.5" height="9.5" fill="none" stroke="#9a9a9a" stroke-width="1"/><rect x="13.5" y="1.5" width="3.5" height="15.5" fill="none" stroke="#9a9a9a" stroke-width="1"/></svg>
<div class="t " style="left:1820.00px;top:466.46px;font-size:16px;line-height:16px;color:#9a9a9a;font-weight:normal;font-style:normal;font-family:'Liberation Sans', sans-serif;letter-spacing:-0.5px;">Ta</div>
<svg class="s" style="left:1820px;top:482px;" width="17" height="8" viewBox="0 0 17 8"><path d="M2 6.5 Q8.5 1 15 6.5" fill="none" stroke="#9a9a9a" stroke-width="1"/></svg>
<svg class="s" style="left:1818px;top:514px;" width="21" height="17" viewBox="0 0 21 17"><rect x="1" y="1" width="19" height="14" fill="none" stroke="#9a9a9a" stroke-width="1.1"/><path d="M1 1 L10.5 9 L20 1 M1 15 L7.5 8 M20 15 L13.5 8" fill="none" stroke="#9a9a9a" stroke-width="1"/></svg>
<div class="r" style="left:0px;top:852px;width:1853px;height:1px;background:#cbcbcb;"></div>
<div class="r" style="left:0px;top:853px;width:1853px;height:30px;background:#f1f1f1;"></div>
<div class="t " style="left:49.60px;top:861.66px;font-size:13.75px;line-height:13.75px;color:#444;font-weight:bold;font-style:normal;font-family:'Liberation Sans', sans-serif;letter-spacing:0.15px;">Page 1 of 1</div>
<div class="r" style="left:132px;top:853px;width:1px;height:30px;background:#cbcbcb;"></div>
<svg class="s" style="left:144px;top:858px;" width="18" height="20" viewBox="0 0 18 20"><path d="M1 2 H16 M1 5 H16 M1 8 H11" stroke="#444" stroke-width="1"/><text x="1" y="18" font-size="8" font-family="Liberation Sans" fill="#444" letter-spacing="0.3">123</text></svg>
<div class="t " style="left:171.00px;top:861.66px;font-size:13.75px;line-height:13.75px;color:#444;font-weight:bold;font-style:normal;font-family:'Liberation Sans', sans-serif;">Word count</div>
<div class="r" style="left:1229px;top:853px;width:1px;height:30px;background:#cbcbcb;"></div>
<div class="t " style="left:1245.50px;top:861.66px;font-size:13.75px;line-height:13.75px;color:#444;font-weight:bold;font-style:normal;font-family:'Liberation Sans', sans-serif;letter-spacing:0.05px;">English (United States)</div>
<svg class="s" style="left:1403px;top:865px;" width="9" height="6" viewBox="0 0 9 6"><path d="M1 1 L4.5 4.5 L8 1" fill="none" stroke="#444" stroke-width="1.1"/></svg>
<svg class="s" style="left:1421px;top:858px;" width="21" height="21" viewBox="0 0 21 21"><g fill="none" stroke="#444" stroke-width="1"><circle cx="10.5" cy="10.5" r="9"/><ellipse cx="10.5" cy="10.5" rx="4" ry="9"/><path d="M1.5 10.5 H19.5 M10.5 1.5 V19.5 M3 6 H18 M3 15 H18"/></g></svg>
<div class="r" style="left:1456px;top:856px;width:26px;height:25px;background:#7d858c;"></div>
<svg class="s" style="left:1458px;top:858px;" width="22" height="21" viewBox="0 0 22 21"><text x="1.8" y="10.5" font-size="9.5" font-family="Liberation Sans" font-weight="bold" fill="#fff" letter-spacing="-0.3">ABC</text><path d="M8.5 15.5 L11.5 18.5 L19 10.5" fill="none" stroke="#fff" stroke-width="1.5"/></svg>
<div class="r" style="left:1493px;top:853px;width:1px;height:30px;background:#cbcbcb;"></div>
<svg class="s" style="left:1506px;top:858px;" width="22" height="21" viewBox="0 0 22 21"><path d="M15 6 V1.5 H1.5 V19.5 H15 V15" fill="none" stroke="#444" stroke-width="1"/><path d="M4 5 H11 M4 8.5 H9 M4 12 H8" stroke="#444" stroke-width="1"/><path d="M9 16 L10 12.5 L18.5 4 L20.5 6 L12 14.5 Z" fill="none" stroke="#444" stroke-width="1"/></svg>
<svg class="s" style="left:1532px;top:865px;" width="9" height="6" viewBox="0 0 9 6"><path d="M1 1 L4.5 4.5 L8 1" fill="none" stroke="#444" stroke-width="1.1"/></svg>
<div class="r" style="left:1555px;top:853px;width:1px;height:30px;background:#cbcbcb;"></div>
<svg class="s" style="left:1571px;top:857px;" width="19" height="23" viewBox="0 0 19 23"><rect x="1.5" y="2" width="15" height="18.5" fill="none" stroke="#444" stroke-width="1.1"/><path d="M9 4.5 V16.5 M3.8 11.3 H14.2" stroke="#444" stroke-width="0.9"/><path d="M7.3 6.3 L9 4.5 L10.7 6.3 M7.3 14.7 L9 16.5 L10.7 14.7 M5.6 9.6 L3.8 11.3 L5.6 13 M12.4 9.6 L14.2 11.3 L12.4 13" fill="none" stroke="#444" stroke-width="0.9"/></svg>
<svg class="s" style="left:1607px;top:860px;" width="24" height="17" viewBox="0 0 24 17"><path d="M2 1.5 V15 M21.8 1.5 V15" stroke="#444" stroke-width="1.1"/><path d="M3.5 8.3 H20.3 M6.5 5.3 L3.5 8.3 L6.5 11.3 M17.3 5.3 L20.3 8.3 L17.3 11.3" fill="none" stroke="#444" stroke-width="1"/></svg>
<div class="r" style="left:1650px;top:868px;width:14px;height:1.2px;background:#444;"></div>
<div class="t " style="left:1685.30px;top:861.66px;font-size:13.75px;line-height:13.75px;color:#444;font-weight:bold;font-style:normal;font-family:'Liberation Sans', sans-serif;letter-spacing:0.18px;">Zoom 100%</div>
<svg class="s" style="left:1782px;top:860px;" width="17" height="17" viewBox="0 0 17 17"><path d="M8.5 1.5 V15.5 M1.5 8.5 H15.5" stroke="#444" stroke-width="1.2"/></svg>
</body></html>
